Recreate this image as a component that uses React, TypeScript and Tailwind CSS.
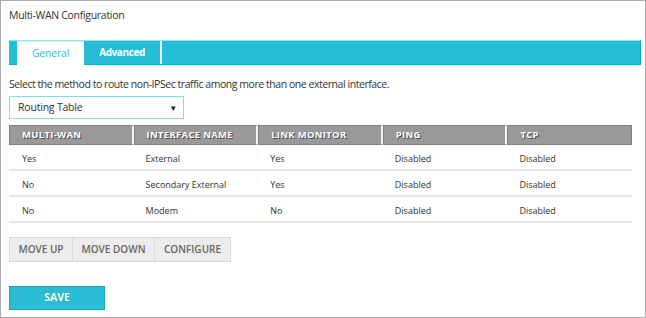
import React from "react";

const rows = [
  { wan: "Yes", name: "External", link: "Yes", ping: "Disabled", tcp: "Disabled" },
  { wan: "No", name: "Secondary External", link: "Yes", ping: "Disabled", tcp: "Disabled" },
  { wan: "No", name: "Modem", link: "No", ping: "Disabled", tcp: "Disabled" },
];

const headers = ["MULTI-WAN", "INTERFACE NAME", "LINK MONITOR", "PING", "TCP"];

export default function App() {
  return (
    <div className="w-[646px] h-[318px] bg-white border border-[#ababab] px-[8px] text-[#333] font-['Open_Sans',sans-serif]">
      <div className="pt-[7px] h-[39px] text-[10.5px] leading-[15px] tracking-[-0.3px]">Multi-WAN Configuration</div>

      {/* tabs */}
      <div className="flex h-[25px] w-[632px] bg-[#26bdd7] border-t border-t-[#9fdfea] border-b border-b-[#16a6c0] border-r border-r-[#16a6c0]">
        <div className="w-[8px]" />
        <div className="w-[67px] bg-white -mb-px flex items-center justify-center text-[10.5px] tracking-[-0.2px] text-[#3bb6cf] border-t border-t-[#d5eef3]">
          General
        </div>
        <div className="w-[76px] flex items-center justify-center text-[10px] font-bold tracking-[-0.4px] text-white">
          Advanced
        </div>
        <div className="w-[2px] bg-[#e9f8fb]" />
      </div>

      <div className="mt-[12px] text-[10.5px] leading-[14px] tracking-[-0.45px] text-[#333]">
        Select the method to route non-IPSec traffic among more than one external interface.
      </div>

      <div className="mt-[5px] w-[175px] h-[23px] border border-[#8fd9e6] flex items-center justify-between pl-[8px] pr-[6px] text-[10.5px] tracking-[-0.2px]">
        <span>Routing Table</span>
        <span className="text-[8px] text-[#222]">▼</span>
      </div>

      {/* table */}
      <div className="mt-[6px] w-[623px]">
        <div className="grid grid-cols-5 h-[20px] bg-[#999]">
          {headers.map((h) => (
            <div
              key={h}
              className="flex items-center pl-[12px] text-[9.5px] font-bold tracking-[0.3px] text-white border border-[#7e7e7e] border-r-2 border-r-[#f2f2f2] last:border-r last:border-r-[#7e7e7e] [text-shadow:1px_1px_0_#4a4a4a]"
            >
              {h}
            </div>
          ))}
        </div>
        {rows.map((r, i) => (
          <div key={i} className="grid grid-cols-5 h-[26px] items-center pt-[3px] border-b-2 border-[#e6e6e6] text-[9px] text-[#333]">
            <div className="pl-[13px]">{r.wan}</div>
            <div className="pl-[12px]">{r.name}</div>
            <div className="pl-[12px]">{r.link}</div>
            <div className="pl-[12px]">{r.ping}</div>
            <div className="pl-[12px]">{r.tcp}</div>
          </div>
        ))}
      </div>

      <div className="mt-[14px] flex h-[25px] text-[10px] font-semibold text-[#666]">
        <button className="w-[64px] bg-[#ececec] border border-[#d9d9d9]">MOVE UP</button>
        <button className="w-[82px] bg-[#ececec] border border-y-[#d9d9d9] border-r-[#d9d9d9] border-l-0">MOVE DOWN</button>
        <button className="w-[76px] bg-[#ececec] border border-y-[#d9d9d9] border-r-[#d9d9d9] border-l-0">CONFIGURE</button>
      </div>

      <button className="mt-[24px] w-[96px] h-[24px] bg-[#29bdd6] border border-[#1aa3bd] text-white text-[10.5px] font-bold [text-shadow:0_0_1px_#1a8aa0]">
        SAVE
      </button>
    </div>
  );
}
